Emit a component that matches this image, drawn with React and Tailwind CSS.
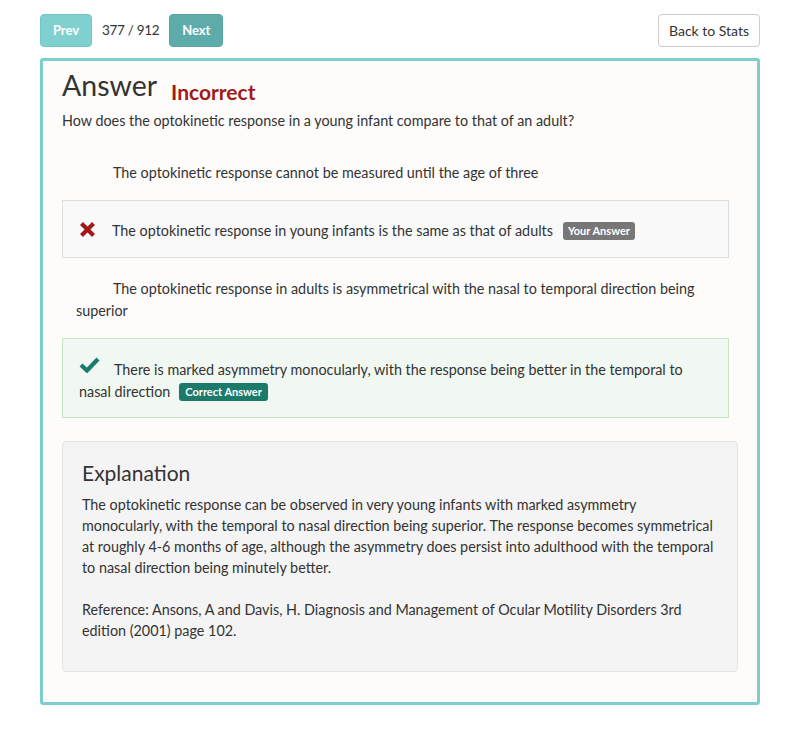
const options = [
  { text: "The optokinetic response cannot be measured until the age of three" },
  { text: "The optokinetic response in young infants is the same as that of adults", state: "wrong" },
  { text: "The optokinetic response in adults is asymmetrical with the nasal to temporal direction being superior" },
  { text: "There is marked asymmetry monocularly, with the response being better in the temporal to nasal direction", state: "right" },
];

const CrossIcon = () => (
  <svg width="17" height="17" viewBox="0 0 17 17" className="inline-block align-[-2px] mr-[16px]">
    <path d="M2.5 2.5 L14.5 14.5 M14.5 2.5 L2.5 14.5" stroke="#a11a1a" strokeWidth="4.2" strokeLinecap="butt" fill="none" />
  </svg>
);

const CheckIcon = () => (
  <svg width="21" height="16" viewBox="0 0 21 16" className="inline-block align-[2px] mr-[14px]">
    <path d="M2 8 L8 13.5 L19 2" stroke="#1b7a6a" strokeWidth="4.2" strokeLinecap="butt" strokeLinejoin="miter" fill="none" />
  </svg>
);

const Option = ({ opt }) => {
  if (opt.state === "wrong") {
    return (
      <div className="border border-[#dddddd] bg-[#f9f9f9] pl-[16px] pr-[14px] pt-[19px] pb-[15px] leading-[22px]">
        <CrossIcon />
        {opt.text}
        <span className="ml-[10px] inline-block rounded-[3px] bg-[#777777] px-[5px] text-[11px] font-bold leading-[18px] text-white align-[1px]">Your Answer</span>
      </div>
    );
  }
  if (opt.state === "right") {
    return (
      <div className="border border-[#c5e5c0] bg-[#f1f8f1] pl-[16px] pr-[14px] pt-[18px] pb-[14px] leading-[22px]">
        <CheckIcon />
        {opt.text}
        <span className="ml-[9px] inline-block rounded-[3px] bg-[#1b7a6a] px-[6px] text-[11px] font-bold leading-[18px] text-white align-[1px]">Correct Answer</span>
      </div>
    );
  }
  return (
    <div className="border border-transparent px-[13px] pt-[19px] pb-[15px] leading-[22px]">
      <span className="inline-block w-[37px]" />
      {opt.text}
    </div>
  );
};

export default function App() {
  return (
    <div className="min-h-screen bg-white px-[40px] pt-[14px] font-['Lato',sans-serif] text-[14.35px] text-[#333333]">
      <div className="flex items-center justify-between">
        <div className="flex items-center gap-[10px]">
          <button className="h-[33px] w-[52px] rounded-[4px] border border-[#75c7c6] bg-[#80d0cf] text-[13px] font-bold text-white">Prev</button>
          <span className="shrink-0 whitespace-nowrap text-[13.5px] tracking-[-0.3px]">377 / 912</span>
          <button className="h-[33px] w-[54px] rounded-[4px] border border-[#58a6a3] bg-[#5eaca9] text-[13px] font-bold text-white">Next</button>
        </div>
        <button className="h-[33px] w-[102px] rounded-[4px] border border-[#cccccc] bg-white text-[14px] text-[#333333]">Back to Stats</button>
      </div>

      <div className="mt-[11px] rounded-[3px] border-[3px] border-[#7dcfcd] bg-[#fdfcfb] px-[19px] pt-[4px] pb-[30px]">
        <div className="flex items-end gap-[14px]">
          <h1 className="text-[28.5px] leading-[40px] text-[#333333]">Answer</h1>
          <span className="mb-[-3px] text-[21px] font-bold leading-[32px] text-[#a11a1a]">Incorrect</span>
        </div>
        <p className="mt-[6px] leading-[20px]">How does the optokinetic response in a young infant compare to that of an adult?</p>

        <div className="mt-[11px] mr-[9px] flex flex-col">
          {options.map((o, i) => (
            <Option key={i} opt={o} />
          ))}
        </div>

        <div className="mt-[23px] rounded-[4px] border border-[#e3e3e3] bg-[#f4f4f4] pl-[19px] pr-[20px] pt-[16px] pb-[30px]">
          <h2 className="mb-[6px] text-[21px] leading-[30px]">Explanation</h2>
          <p className="leading-[21px]">
            The optokinetic response can be observed in very young infants with marked asymmetry monocularly, with the temporal to nasal direction being superior. The response becomes symmetrical at roughly 4-6 months of age, although the asymmetry does persist into adulthood with the temporal to nasal direction being minutely better.
          </p>
          <p className="mt-[21px] leading-[21px]">
            Reference: Ansons, A and Davis, H. Diagnosis and Management of Ocular Motility Disorders 3rd edition (2001) page 102.
          </p>
        </div>
      </div>
    </div>
  );
}
